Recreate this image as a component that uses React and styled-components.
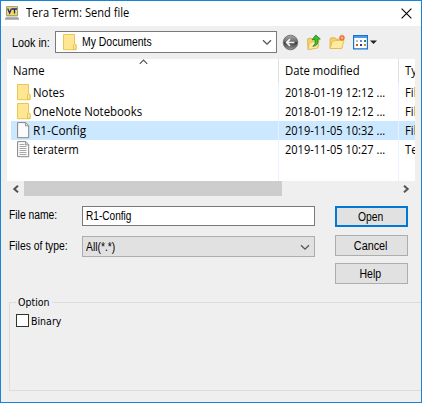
import React from "react";
import styled, { createGlobalStyle } from "styled-components";

const Global = createGlobalStyle`
  *, *::before, *::after { box-sizing: border-box; }
  body { margin: 0; background: #efefef; }
`;

const Dialog = styled.main`
  width: 422px;
  height: 403px;
  display: flex;
  flex-direction: column;
  border: 1px solid #1883d7;
  background: #efefef;
  color: #000;
  overflow: hidden;
  font: 12px/14px "Liberation Sans", Arial, sans-serif;
`;

const Text = styled.span`
  display: inline-block;
  white-space: pre;
  transform: scaleX(${(p) => p.$stretch || 0.86});
  transform-origin: ${(p) => (p.$center ? "center" : "left")};
`;

const SystemText = styled(Text)`
  font: 12px/18px "Open Sans", "Noto Sans", sans-serif;
  transform: scaleX(${(p) => p.$stretch || 0.94});
`;

const TitleBar = styled.header`
  height: 25px;
  flex: none;
  display: flex;
  align-items: center;
  gap: 7px;
  padding: 0 9px 1px 4px;
  background: #fff;
`;

const CloseButton = styled.button`
  display: flex;
  margin-left: auto;
  padding: 0;
  border: 0;
  background: none;
`;

const LocationRow = styled.div`
  height: 33px;
  flex: none;
  display: flex;
  align-items: flex-start;
  padding: 5px 0 0 11px;
`;

const LookLabel = styled.label`
  width: 43px;
  padding-top: 5px;
`;

const LocationBox = styled.div`
  width: 222px;
  height: 22px;
  display: flex;
  align-items: center;
  gap: 5px;
  padding: 0 4px 0 7px;
  border: 1px solid #7a7a7a;
  background: #fff;

  > :last-child { margin-left: auto; }
`;

const Tools = styled.nav`
  display: flex;
  align-items: center;
  height: 22px;
  gap: 7px;
  margin-left: 5px;
`;

const FileList = styled.section`
  width: 408px;
  height: 122px;
  flex: none;
  margin-left: 6px;
  background: #fff;
  overflow: hidden;
`;

const Columns = styled.div`
  display: grid;
  grid-template-columns: 268px 120px 16px;
  margin-left: 4px;
  background: ${(p) => (p.$selected ? "#cce8ff" : "transparent")};
  height: ${(p) => p.$height || 19}px;
`;

const Cell = styled.div`
  display: flex;
  align-items: center;
  min-width: 0;
  overflow: hidden;
  gap: 2px;
  padding-left: ${(p) => p.$pad ?? 6}px;
  border-right: 1px solid ${(p) => (p.$head ? "#e1e1e1" : "#eaf3fd")};

  &:last-child { border-right: 0; }
`;

const NameHead = styled(Cell)`
  display: grid;
  grid-template-columns: 126px 9px;
  gap: 0;

  svg { align-self: start; }
`;

const ScrollBar = styled.div`
  width: 408px;
  height: 15px;
  flex: none;
  display: flex;
  align-items: center;
  margin-left: 6px;
  padding: 0 5px 0 5px;
`;

const Thumb = styled.div`
  width: 258px;
  height: 15px;
  margin: 0 auto 0 5px;
  background: #cdcdcd;
`;

const Form = styled.form`
  height: 88px;
  flex: none;
  display: grid;
  grid-template-columns: 73px 233px 73px;
  margin: 10px 0 0 8px;
`;

const Labels = styled.div`
  display: flex;
  flex-direction: column;
  gap: 17px;
  padding-top: 2px;
`;

const Fields = styled.div`
  display: flex;
  flex-direction: column;
  gap: 10px;
`;

const Field = styled.div`
  height: 20px;
  display: flex;
  align-items: center;
  padding: 0 4px 0 3px;
  border: 1px solid #7a7a7a;
  background: #fff;
`;

const TypeSelect = styled(Field)`
  height: 21px;
  border-color: #adadad;
  background: #e1e1e1;
  justify-content: space-between;
  padding-top: 1px;
`;

const Actions = styled.div`
  display: flex;
  flex-direction: column;
  gap: 7px;
  margin-left: 20px;
  width: 73px;
`;

const Button = styled.button`
  height: 21px;
  display: flex;
  align-items: center;
  justify-content: center;
  margin: 0 0 ${(p) => (p.$primary ? 1 : 0)}px;
  padding: 0 2px 0 0;
  border: ${(p) => (p.$primary ? "2px solid #0078d7" : "1px solid #adadad")};
  background: #e1e1e1;
  color: #000;
  font: 12px/16px "Liberation Sans", Arial, sans-serif;
`;

const OptionGroup = styled.fieldset`
  min-width: 0;
  height: 96px;
  margin: 1px 0 0 8px;
  padding: 5px 0 0 6px;
  border: 1px solid #dcdcdc;
  border-right: 0;
`;

const Legend = styled.legend`
  width: 36px;
  padding: 1px 0 0 2px;
  margin-bottom: -1px;
  font: 11px/14px "DejaVu Sans", sans-serif;
`;

const CheckLabel = styled.label`
  display: flex;
  align-items: flex-start;
  gap: 2px;
  font: 11px/16px "DejaVu Sans", sans-serif;
`;

const CheckBox = styled.span`
  width: 13px;
  height: 13px;
  border: 1px solid #333;
  background: #fff;
`;

const Chevron = ({ color = "#555" }) => (
  <svg width="10" height="7" viewBox="0 0 10 7" fill="none" stroke={color} strokeWidth="1.3">
    <path d="M1 1.3 5 5.2 9 1.3" />
  </svg>
);

const FolderIcon = () => (
  <svg width="14" height="17" viewBox="0 0 14 17">
    <path d="M.5.5h11v10h1.5v5.2H.5z" fill="#ffe693" stroke="#e9c750" />
    <path d="M10.5 15.5v-4.6l1.2-1.4 1.3 1.4v4.6z" fill="#ffe99d" stroke="#dfb944" strokeWidth=".8" />
  </svg>
);

const FileIcon = ({ lines }) => (
  <svg width="14" height="17" viewBox="0 0 14 17">
    <path d="M.6.6h8.2l2.9 3v12.1H.6z" fill="#fbfbfb" stroke="#858585" />
    <path d="M8.5.7v3.2h3.1" fill="#ddd" stroke="#858585" strokeWidth=".8" />
    {lines && <path d="M2.5 3.5h5M2.5 5.5h7M2.5 7.5h7M2.5 9.5h7M2.5 11.5h7M2.5 13.5h7" stroke="#929292" strokeWidth=".8" />}
  </svg>
);

const TerminalIcon = () => (
  <svg width="14" height="14" viewBox="0 0 14 14">
    <path d="M1.5.6h11v9h-11z" fill="#f5df3d" stroke="#999" />
    <path d="M2 10.4h10l2 1.6v1.5H0V12z" fill="#b5b5b5" />
    <path d="M0 13h14" stroke="#888" strokeWidth=".8" />
    <path d="m2.7 2.5 1.9 4.6 1.9-4.6M7 3h5M9.5 3v4.6" fill="none" stroke="#1d21a0" strokeWidth="1.3" />
  </svg>
);

const BackIcon = () => (
  <svg width="17" height="17" viewBox="0 0 17 17">
    <defs>
      <linearGradient id="backFill" x2="0" y2="1">
        <stop stopColor="#aaa" /><stop offset=".48" stopColor="#666" />
        <stop offset=".5" stopColor="#3d3d3d" /><stop offset="1" stopColor="#999" />
      </linearGradient>
    </defs>
    <circle cx="8.5" cy="8.5" r="7.3" fill="url(#backFill)" stroke="#777" />
    <path d="M12.5 8.5h-8M8 5.2 4.7 8.5 8 11.8" fill="none" stroke="#f3f3f3" strokeWidth="1.7" />
  </svg>
);

const OpenFolder = () => (
  <>
    <path d="M1 5.3 2 3.8h4l1 1.4h6v9H1z" fill="#f5d36c" stroke="#d8ad43" strokeWidth=".8" />
    <path d="m1 14.5 2.3-7 3.2-1H15l-2.4 8z" fill="#ffeaa0" stroke="#dfb64d" strokeWidth=".8" />
  </>
);

const UpIcon = () => (
  <svg width="16" height="17" viewBox="0 0 16 17">
    <path d="M1.5 5 5 4l1 1.2 6-.8v8.8l-10 2.3z" fill="#f5d36c" stroke="#d8ad43" strokeWidth=".8" />
    <path d="m2 15.5 1.5-7 9.5-2-1.4 7.6z" fill="#ffeaa0" stroke="#dfb64d" strokeWidth=".8" />
    <path d="M6.8 12.2C9.4 11 9.4 8.8 9 5.5l-3 .3L9.8 1l4.5 4-2.5.3c.7 4.1-.9 6.8-5 6.9z" fill="#43bd32" stroke="#17831b" strokeWidth=".8" />
  </svg>
);

const NewFolderIcon = () => (
  <svg width="17" height="17" viewBox="0 0 17 17">
    <OpenFolder />
    <path d="M13 .8v6M10 3.8h6M10.9 1.7l4.2 4.2M15.1 1.7l-4.2 4.2" stroke="#f16a37" strokeWidth="1.3" />
    <circle cx="13" cy="3.8" r="1.1" fill="#ffd968" />
  </svg>
);

const ViewIcon = () => (
  <svg width="25" height="15" viewBox="0 0 25 15">
    <path d="M.6.6h13.8v13.2H.6z" fill="#fff" stroke="#1673d1" strokeWidth="1.2" />
    <path d="M1 1h13v2H1z" fill="#4d9be7" />
    <path d="M3 5h2v2H3z" fill="#bbb" />
    <path d="M7 5h2v2H7z" fill="#6889d8" />
    <path d="M11 5h2v2h-2z" fill="#378650" />
    <path d="M3 9h2v2H3z" fill="#d3512d" />
    <path d="M7 9h2v2H7z" fill="#253a9c" />
    <path d="M11 9h2v2h-2z" fill="#c39423" />
    <path d="M17 5.5h7L20.5 9z" fill="#222" />
  </svg>
);

const ScrollArrow = ({ right }) => (
  <svg width="7" height="8" viewBox="0 0 7 8" fill="none" stroke="#555" strokeWidth="2">
    <path d={right ? "M1 .7 4.7 4 1 7.3" : "M6 .7 2.3 4 6 7.3"} />
  </svg>
);

const files = [
  { name: "Notes", date: "2018-01-19 12:12 ...", type: "File folder", icon: <FolderIcon />, stretch: 0.95 },
  { name: "OneNote Notebooks", date: "2018-01-19 12:12 ...", type: "File folder", icon: <FolderIcon />, stretch: 0.95 },
  { name: "R1-Config", date: "2019-11-05 10:32 ...", type: "File", icon: <FileIcon />, selected: true, stretch: 0.99 },
  { name: "teraterm", date: "2019-11-05 10:27 ...", type: "Text", icon: <FileIcon lines />, stretch: 0.92 },
];

export default function App() {
  return (
    <>
      <Global />
      <Dialog>
        <TitleBar>
          <TerminalIcon />
          <SystemText $stretch={0.925}>Tera Term: Send file</SystemText>
          <CloseButton aria-label="Close">
            <svg width="11" height="11" viewBox="0 0 11 11" stroke="#000" strokeWidth="1.1">
              <path d="m.6.6 9.8 9.8M10.4.6.6 10.4" />
            </svg>
          </CloseButton>
        </TitleBar>
        <LocationRow>
          <LookLabel><Text $stretch={0.9}>Look in:</Text></LookLabel>
          <LocationBox>
            <FolderIcon />
            <Text $stretch={0.87}>My Documents</Text>
            <Chevron />
          </LocationBox>
          <Tools>
            <BackIcon /><UpIcon /><NewFolderIcon /><ViewIcon />
          </Tools>
        </LocationRow>
        <FileList>
          <Columns $height={24}>
            <NameHead $head $pad={2}>
              <SystemText>Name</SystemText>
              <svg width="9" height="6" viewBox="0 0 9 6" fill="none" stroke="#555" strokeWidth="1.2">
                <path d="M.8 4.8 4.5 1l3.7 3.8" />
              </svg>
            </NameHead>
            <Cell $head><SystemText>Date modified</SystemText></Cell>
            <Cell $head><SystemText>Type</SystemText></Cell>
          </Columns>
          {files.map((file) => (
            <Columns key={file.name} $selected={file.selected}>
              <Cell>{file.icon}<SystemText $stretch={file.stretch}>{file.name}</SystemText></Cell>
              <Cell><SystemText $stretch={0.92}>{file.date}</SystemText></Cell>
              <Cell><SystemText>{file.type}</SystemText></Cell>
            </Columns>
          ))}
          <Columns $height={22}><Cell /><Cell /><Cell /></Columns>
        </FileList>
        <ScrollBar><ScrollArrow /><Thumb /><ScrollArrow right /></ScrollBar>
        <Form onSubmit={(event) => event.preventDefault()}>
          <Labels>
            <Text>File name:</Text>
            <Text>Files of type:</Text>
          </Labels>
          <Fields>
            <Field><Text $stretch={0.84}>R1-Config</Text></Field>
            <TypeSelect><Text>All(*.*)</Text><Chevron /></TypeSelect>
          </Fields>
          <Actions>
            <Button $primary><Text $center>Open</Text></Button>
            <Button><Text $center $stretch={0.9}>Cancel</Text></Button>
            <Button><Text $center $stretch={0.88}>Help</Text></Button>
          </Actions>
        </Form>
        <OptionGroup>
          <Legend><Text $stretch={0.86}>Option</Text></Legend>
          <CheckLabel><CheckBox /><Text $stretch={0.86}>Binary</Text></CheckLabel>
        </OptionGroup>
      </Dialog>
    </>
  );
}
